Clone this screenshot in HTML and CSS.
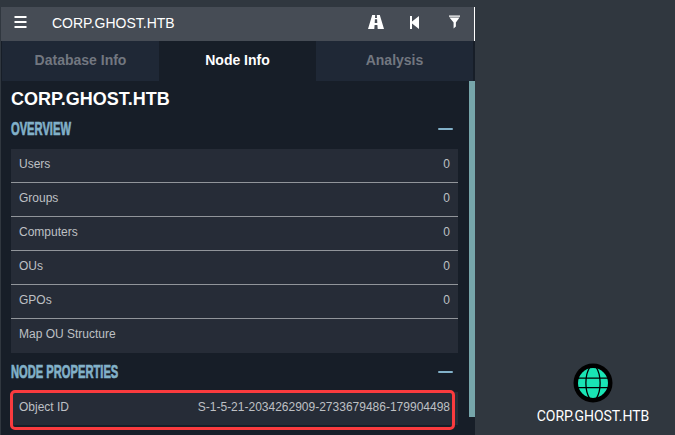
FILE: index.html
```html
<!DOCTYPE html>
<html lang="en">
<head>
<meta charset="utf-8">
<title>CORP.GHOST.HTB</title>
<link rel="stylesheet" href="styles.css">
</head>
<body>
<main class="app">
  <aside class="panel">
    <header class="search">
      <svg class="menu" viewBox="0 0 12 12"><path d="M0 0h12v2H0zM0 5h12v2H0zM0 10h12v2H0z"/></svg>
      <span class="query">CORP.GHOST.HTB</span>
      <svg class="road" viewBox="0 0 16 14"><path fill-rule="evenodd" d="M4.2 0H7.2L7 3H9L8.800 0H11.800L16 14H9.700L9.400 10H6.600L6.300 14H0zM6.900 4.300L6.700 8H9.300L9.100 4.300z"/></svg>
      <svg class="back" viewBox="0 0 9 13"><path d="M0 0h2v5.500L9 0v13L2 7.500V13H0z"/></svg>
      <svg class="filter" viewBox="0 0 12 14"><path d="M0 0h12v1.200H0zM.5 2h11L7.500 7.500V12L5 14V7.500z"/></svg>
    </header>
    <nav class="tabs">
      <span class="tab">Database Info</span>
      <span class="tab active">Node Info</span>
      <span class="tab">Analysis</span>
    </nav>
    <div class="body">
      <section class="content">
        <h1>CORP.GHOST.HTB</h1>
        <div class="head overview"><h2>OVERVIEW</h2><i class="minus"></i></div>
        <div class="rows">
          <div class="row"><span>Users</span><span>0</span></div>
          <div class="row"><span>Groups</span><span>0</span></div>
          <div class="row"><span>Computers</span><span>0</span></div>
          <div class="row"><span>OUs</span><span>0</span></div>
          <div class="row"><span>GPOs</span><span>0</span></div>
          <div class="row"><span>Map OU Structure</span></div>
        </div>
        <div class="head props"><h2>NODE PROPERTIES</h2><i class="minus"></i></div>
        <div class="rows marked">
          <div class="row"><span>Object ID</span><span>S-1-5-21-2034262909-2733679486-179904498</span></div>
          <div class="marker"></div>
        </div>
      </section>
      <div class="scrollbar"></div>
    </div>
  </aside>
  <div class="node">
    <svg class="globe" viewBox="0 0 40 40">
      <circle cx="20" cy="20" r="19.500"/>
      <circle class="fill" cx="20" cy="20" r="15"/>
      <path class="lines" d="M3 15.200H37M3 24.700H37M17 4C11.500 12 11.500 28 17 36M23 4C28.500 12 28.500 28 23 36"/>
    </svg>
    <span>CORP.GHOST.HTB</span>
  </div>
</main>
</body>
</html>
```
FILE: styles.css
```css
* { box-sizing: border-box; }
body {
  margin: 0;
  background: #30373f;
  font-family: "Liberation Sans", Arial, sans-serif;
}
.app {
  position: relative;
  width: 675px;
  height: 435px;
  overflow: hidden;
  padding: 7px 0 0 1px;
}
.panel {
  width: 474px;
  height: 428px;
  background: #171e28;
  display: flex;
  flex-direction: column;
}
.search {
  height: 34px;
  flex: none;
  background: #464c55;
  border-right: 1px solid #fff;
  display: flex;
  align-items: flex-start;
  padding: 0 14px 0 13px;
  color: #fff;
}
svg { display: block; flex: none; }
.search svg { fill: #fff; }
.menu { width: 13px; height: 12px; margin-top: 9px; }
.query {
  flex: 1;
  margin-left: 25px;
  font-size: 14px;
  line-height: 32px;
}
.road { width: 16px; height: 14px; margin: 8px 26px 0 0; }
.back { width: 9px; height: 13px; margin: 9px 30px 0 0; }
.filter { width: 11px; height: 14px; margin-top: 8px; }
.tabs {
  height: 40px;
  flex: none;
  display: grid;
  grid-template-columns: 157px 157px 157px;
  padding: 0 2px 0 1px;
}
.tab {
  background: #1f2836;
  color: #727780;
  font-size: 14px;
  font-weight: bold;
  line-height: 38px;
  text-align: center;
}
.tab.active { background: #171e28; color: #fff; }
.body { display: flex; flex: 1; }
.content { width: 468px; padding: 0 11px 0 10px; }
h1, h2 { margin: 0; }
h1 { color: #fff; font-size: 18px; line-height: 20px; padding-top: 8px; height: 32px; }
.head { display: flex; justify-content: space-between; color: #82b1c9; }
.overview { height: 36px; padding-top: 6px; }
.props { height: 39px; padding-top: 9px; }
h2 {
  font-size: 18px;
  line-height: 20px;
  white-space: nowrap;
  transform: scaleX(.62);
  transform-origin: left center;
  -webkit-text-stroke: .7px #82b1c9;
}
.minus { width: 15px; height: 2px; margin: 9px 5px 0 0; background: #82b1c9; border-radius: 1px; }
.rows { background: #262c37; color: #bec0c4; font-size: 12px; }
.row {
  height: 34px;
  display: flex;
  justify-content: space-between;
  padding: 0 8px;
  line-height: 30px;
  border-bottom: 1px solid #91959a;
}
.row:last-child, .marked .row { border-bottom: 0; }
.marked { position: relative; height: 33px; }
.marker {
  position: absolute;
  left: -1px;
  top: -2px;
  width: 445px;
  height: 40px;
  border: 3px solid #fa3b3e;
  border-radius: 5px;
}
.scrollbar { width: 6px; height: 336px; background: #76a5aa; }
.node {
  position: absolute;
  left: 533px;
  top: 363px;
  width: 120px;
  display: flex;
  flex-direction: column;
  align-items: center;
  color: #fff;
  font: 14px/18px Roboto, sans-serif;
}
.node span { margin-top: 4px; }
.globe { width: 40px; height: 40px; }
.fill { fill: #19e5b5; }
.lines { fill: none; stroke: #000; stroke-width: 1.300; }
```
